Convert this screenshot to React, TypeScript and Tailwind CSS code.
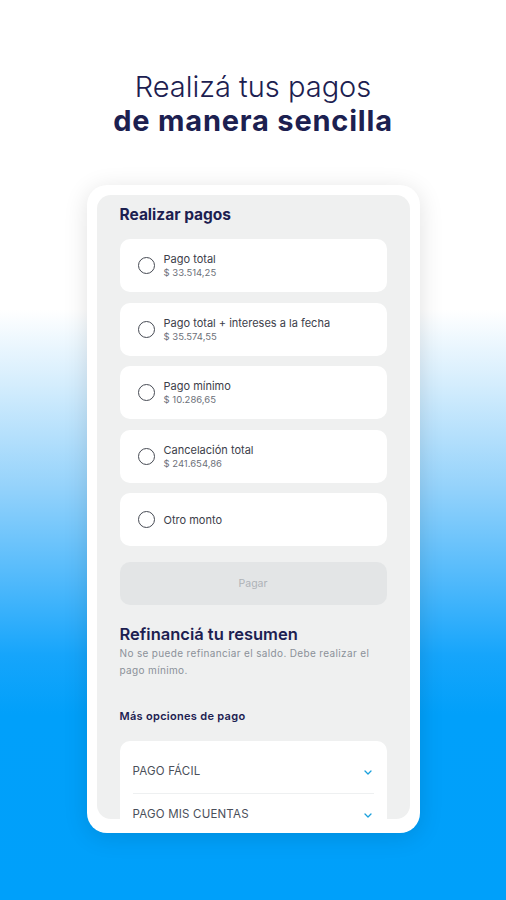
import React from "react";

const options = [
  { label: "Pago total", amount: "$ 33.514,25" },
  { label: "Pago total + intereses a la fecha", amount: "$ 35.574,55" },
  { label: "Pago mínimo", amount: "$ 10.286,65" },
  { label: "Cancelación total", amount: "$ 241.654,86" },
  { label: "Otro monto", amount: "" },
];

function Chevron() {
  return (
    <svg width="8" height="5" viewBox="0 0 8 5" fill="none">
      <path d="M1 1L4 4L7 1" stroke="#1aa0dc" strokeWidth="1.3" strokeLinecap="round" strokeLinejoin="round" />
    </svg>
  );
}

export default function App() {
  return (
    <div
      className="w-full h-[900px] overflow-hidden flex flex-col items-center bg-[linear-gradient(to_bottom,#ffffff_0px,#ffffff_310px,#d4edfd_385px,#96d3fb_485px,#4db8fb_585px,#16a5fb_655px,#01a0fa_715px,#00a0fa_900px)]"
      style={{ fontFamily: "Inter, 'Noto Sans', sans-serif" }}
    >
      <div className="pt-[70px] text-center text-[#1c2050] text-[29px] leading-[34px] shrink-0">
        <div className="font-light">Realizá tus pagos</div>
        <div className="font-bold tracking-[0.8px]">de manera sencilla</div>
      </div>

      <div className="mt-[47px] w-[333px] h-[648px] shrink-0 bg-white rounded-[20px] pt-[10px] px-[10px] pb-[14px] shadow-[0_4px_24px_rgba(0,0,0,0.12)] flex flex-col">
        <div className="flex-1 rounded-[14px] bg-[#eff0f0] overflow-hidden px-[23px] pt-[10px]">
          <div className="text-[15.5px] leading-[20px] font-bold text-[#1c2050]">Realizar pagos</div>

          <div className="mt-[14px] flex flex-col gap-[10.5px]">
            {options.map((o) => (
              <div key={o.label} className="h-[53px] shrink-0 bg-white rounded-[10px] flex items-center pl-[18px] pr-3">
                <div className="w-[17px] h-[17px] rounded-full border-[1.6px] border-[#464a53] shrink-0" />
                <div className="ml-[9px] flex flex-col">
                  <div className="text-[11px] leading-[14px] text-[#3c404a]">{o.label}</div>
                  {o.amount && <div className="text-[9.5px] leading-[13px] text-[#6c7079]">{o.amount}</div>}
                </div>
              </div>
            ))}
          </div>

          <div className="mt-[16px] h-[43px] rounded-[10px] bg-[#e3e5e6] flex items-center justify-center text-[10.5px] text-[#aeb2b7]">
            Pagar
          </div>

          <div className="mt-[19px] text-[16.5px] leading-[20px] font-semibold text-[#1c2050]">Refinanciá tu resumen</div>
          <div className="mt-[1px] text-[10px] leading-[17px] tracking-[0.35px] text-[#8b9099]">
            No se puede refinanciar el saldo. Debe realizar el pago mínimo.
          </div>

          <div className="mt-[30px] text-[11px] leading-[14px] tracking-[0.3px] font-semibold text-[#1c2050]">Más opciones de pago</div>

          <div className="mt-[18px] bg-white rounded-[10px] px-[13px] pb-4">
            <div className="h-[53px] flex items-center justify-between border-b border-[#eef0f1] pt-[10px]">
              <span className="text-[11.5px] text-[#4a4f5a] tracking-[0.2px]">PAGO FÁCIL</span>
              <span className="mr-[2px]"><Chevron /></span>
            </div>
            <div className="h-[42px] flex items-center justify-between">
              <span className="text-[11.5px] text-[#4a4f5a] tracking-[0.2px]">PAGO MIS CUENTAS</span>
              <span className="mr-[2px]"><Chevron /></span>
            </div>
          </div>
        </div>
      </div>
    </div>
  );
}
